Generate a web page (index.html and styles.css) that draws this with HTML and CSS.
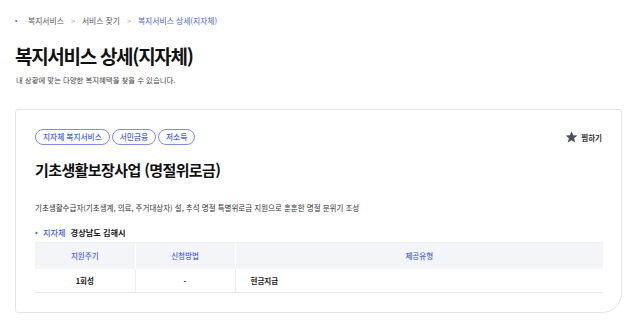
FILE: index.html
```html
<!DOCTYPE html>
<html lang="ko">
<head>
<meta charset="utf-8">
<link rel="stylesheet" href="styles.css">
</head>
<body>
<div class="page">
  <nav class="crumbs">
    <span class="dot">•</span>
    <span class="crumb">복지서비스</span>
    <span class="sep">&gt;</span>
    <span class="crumb">서비스 찾기</span>
    <span class="sep">&gt;</span>
    <span class="crumb current">복지서비스 상세(지자체)</span>
  </nav>
  <h1 class="title">복지서비스 상세(지자체)</h1>
  <p class="subtitle">내 상황에 맞는 다양한 복지혜택을 찾을 수 있습니다.</p>

  <section class="card">
    <div class="card-top">
      <div class="tags">
        <span class="tag">지자체 복지서비스</span>
        <span class="tag">서민금융</span>
        <span class="tag">저소득</span>
      </div>
      <button class="fav">
        <svg width="13" height="12" viewBox="0 0 24 23"><path d="M12 0.5l3.1 7.6 8.2.6-6.3 5.3 2 8-7-4.4-7 4.4 2-8L.7 8.7l8.2-.6z" fill="#4b4e63"/></svg>
        <span>찜하기</span>
      </button>
    </div>
    <h2 class="svc-title">기초생활보장사업 (명절위로금)</h2>
    <p class="desc">기초생활수급자(기초생계, 의료, 주거대상자) 설, 추석 명절 특별위로금 지원으로 훈훈한 명절 분위기 조성</p>
    <div class="region"><span class="rdot">•</span><span class="rlabel">지자체</span><span class="rvalue">경상남도 김해시</span></div>
    <table class="info">
      <thead>
        <tr><th class="c1">지원주기</th><th class="c2">신청방법</th><th class="c3">제공유형</th></tr>
      </thead>
      <tbody>
        <tr><td class="center">1회성</td><td class="center">-</td><td class="left">현금지급</td></tr>
      </tbody>
    </table>
  </section>
</div>
</body>
</html>
```
FILE: styles.css
```css
* { box-sizing: border-box; }
body {
  margin: 0;
  background: #fff;
  font-family: "Noto Sans CJK KR", "Noto Sans", sans-serif;
  color: #111;
}
.page {
  padding: 12px 10px 0 15px;
}
.crumbs {
  display: flex;
  align-items: center;
  height: 16px;
  font-size: 7.8px;
  color: #555;
}
.crumbs .dot { width: 13px; font-size: 7px; color: #666; }
.crumbs .sep { width: 18px; text-align: center; color: #aaa; font-size: 8px; }
.crumbs .current { color: #4a63d8; }
.title {
  margin: 14px 0 0;
  font-size: 19px;
  font-weight: 700;
  line-height: 28px;
  letter-spacing: -1.3px;
  color: #111;
}
.subtitle {
  margin: 3px 0 0 1px;
  font-size: 7.4px;
  line-height: 14px;
  color: #444;
}
.card {
  margin-top: 22px;
  width: 607px;
  border: 1px solid #e6e6e6;
  border-radius: 3px 3px 20px 3px;
  padding: 19px 18px 19px 19px;
}
.card-top {
  display: flex;
  justify-content: space-between;
  align-items: center;
  height: 16px;
}
.tags { display: flex; gap: 2px; }
.tag {
  height: 16px;
  padding: 0 7px;
  border: 1px solid #7d8fe6;
  border-radius: 8px;
  font-size: 7.7px;
  font-weight: 500;
  line-height: 14px;
  color: #4a63d8;
}
.fav {
  display: flex;
  align-items: center;
  gap: 3px;
  background: none;
  border: 0;
  padding: 0;
  margin-right: 1px;
  font-family: inherit;
  font-size: 7.5px;
  font-weight: 700;
  color: #333;
}
.svc-title {
  margin: 14px 0 0;
  font-size: 15px;
  font-weight: 700;
  line-height: 22px;
  letter-spacing: -0.6px;
  color: #111;
}
.desc {
  margin: 21px 0 0;
  font-size: 7.5px;
  line-height: 12px;
  color: #333;
}
.region {
  margin-top: 12px;
  display: flex;
  align-items: center;
  font-size: 8.2px;
  line-height: 12px;
}
.rdot { color: #4a63d8; width: 8px; font-size: 8px; }
.rlabel { color: #4a63d8; font-weight: 500; margin-right: 5px; }
.rvalue { color: #222; font-weight: 700; }
.info {
  margin-top: 4px;
  width: 568px;
  border-collapse: collapse;
  font-size: 7.5px;
}
.info th {
  height: 26px;
  background: #f4f5f9;
  color: #4a63d8;
  font-weight: 500;
  border-top: 1px solid #eef0f4;
  border-left: 1px solid #fff;
}
.info th:first-child, .info td:first-child { border-left: 0; }
.info .c1, .info .c2 { width: 100px; }
.info td {
  height: 24px;
  font-weight: 700;
  color: #222;
  border-bottom: 1px solid #e8e8e8;
  border-left: 1px solid #ececec;
}
.info td.center { text-align: center; }
.info td.left { text-align: left; padding-left: 15px; }
```
